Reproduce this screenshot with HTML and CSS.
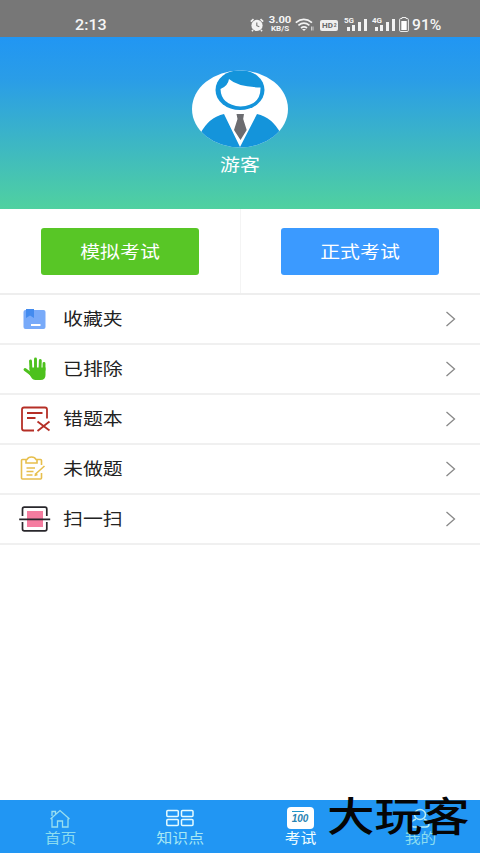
FILE: index.html
```html
<!DOCTYPE html>
<html lang="zh-CN">
<head>
<meta charset="utf-8">
<title>我的</title>
<link rel="stylesheet" href="styles.css">
</head>
<body>
<div class="app">
  <header class="status">
    <span class="time">2:13</span>
    <div class="indicators">
      <svg class="alarm" width="14" height="14" viewBox="0 0 14 14"><circle cx="7" cy="7.400" r="5.600" fill="#f3f3f3"/><path d="M.8 3.700 3.500 1.200M13.200 3.700 10.500 1.200M3 12l-1 1.300M11 12l1 1.300" stroke="#f3f3f3" stroke-width="1.600"/><path d="M6.800 4.500v3.200l2.500 1" fill="none" stroke="#777" stroke-width="1.100"/></svg>
      <div class="speed"><b>3.00</b><small>KB/S</small></div>
      <svg class="wifi" width="19" height="14" viewBox="0 0 19 14" fill="none" stroke="#f3f3f3" stroke-width="1.700"><path d="M.8 4.700q8-6.500 16.200 0M3.400 7.400q5.500-4.500 11 0M6 10q3-2.300 6 0"/><path d="m7 11 2 2 2-2Z" fill="#f3f3f3" stroke="none"/><path d="M16.500 8.500v4M18 8.500v4" stroke-width=".7"/></svg>
      <div class="hd">HD<i>2</i></div>
      <div class="cell"><small>5G</small><svg width="23" height="12" viewBox="0 0 23 12" fill="#f3f3f3"><path d="M3 8h3v4H3zM8 6h3v6H8zM14 3h3v9h-3zM20 0h3v12h-3z"/></svg></div>
      <div class="cell second"><small>4G</small><svg width="23" height="12" viewBox="0 0 23 12" fill="#f3f3f3"><path d="M3 8h3v4H3zM8 6h3v6H8zM14 3h3v9h-3zM20 0h3v12h-3z"/></svg></div>
      <svg class="battery" width="10" height="15" viewBox="0 0 10 15"><path d="M3 1.500V.5h4v1h1.200q1.200 0 1.200 1.200v10.600q0 1.200-1.200 1.200H1.800Q.6 14.500.6 13.300V2.700q0-1.200 1.200-1.200Z" fill="none" stroke="#eee"/><path d="M2.300 4h5.400v9H2.300z" fill="#fff"/></svg>
      <span class="percent">91%</span>
    </div>
  </header>

  <section class="profile">
    <svg class="avatar" width="97" height="78" viewBox="0 0 97 78">
      <defs><clipPath id="oval"><ellipse cx="48" cy="39" rx="48" ry="38.500"/></clipPath></defs>
      <g clip-path="url(#oval)">
        <path fill="#fff" d="M0 0h97v78H0z"/>
        <path fill="#1494db" d="M8 64Q17 47 32 44L48 77 65 44Q80 47 89 64L80 78H17Z"/>
        <ellipse cx="48" cy="20" rx="24.500" ry="20" fill="#1494db"/>
        <path fill="#fff" d="M37 9Q46 17 68.500 17.500Q69 35.500 48.500 36.500Q29 35 28.500 19Q36 16 37 9Z"/>
        <path fill="#6c6c70" d="M44.500 44h7.500l-.8 5 3.500 11-6.200 10-6.500-10 3.500-11Z"/>
      </g>
    </svg>
    <div class="name"><span class="wide">游客</span></div>
  </section>

  <section class="exams">
    <div class="exam"><button class="mock"><span class="wide">模拟考试</span></button></div>
    <div class="exam"><button class="formal"><span class="wide">正式考试</span></button></div>
  </section>

  <main class="menu">
    <div class="row">
      <svg class="icon" width="32" height="28" viewBox="0 0 32 28"><rect x="4.500" y="5" width="22" height="19" rx="2" fill="#78aaf9"/><path d="M7 4h8v9l-4-2.500L7 13Z" fill="#438bef"/><path d="M12 20h9.500" stroke="#fff" stroke-width="2"/></svg>
      <span class="wide">收藏夹</span><svg class="arrow" width="12" height="16" viewBox="0 0 12 16"><path d="m1.500 1 8 7-8 7"/></svg>
    </div>
    <div class="row">
      <svg class="icon" width="32" height="28" viewBox="0 0 32 28"><path d="M12 15 11.500 6M16.500 14V4M21 14l.3-8.500M25 15V8.500M12 19 6 14.500" fill="none" stroke="#4dc11d" stroke-width="2.900" stroke-linecap="round"/><path d="M10.500 12.500h16V20q0 5-5 5h-5q-3 0-4.500-3l-2.500-4 1.500-1Z" fill="#4dc11d"/></svg>
      <span class="wide">已排除</span><svg class="arrow" width="12" height="16" viewBox="0 0 12 16"><path d="m1.500 1 8 7-8 7"/></svg>
    </div>
    <div class="row">
      <svg class="icon" width="32" height="28" viewBox="0 0 32 28" fill="none" stroke="#b52f26" stroke-width="1.800"><path d="M15 25.500H5q-2 0-2-2v-19q0-2 2-2h21q2 0 2 2v9M8 8h15.500M8 13h8.500M18.500 16.500l12 9M30.500 16.500l-12 9.500"/></svg>
      <span class="wide">错题本</span><svg class="arrow" width="12" height="16" viewBox="0 0 12 16"><path d="m1.500 1 8 7-8 7"/></svg>
    </div>
    <div class="row">
      <svg class="icon" width="32" height="28" viewBox="0 0 32 28" fill="none" stroke="#e7bf4d" stroke-width="1.600"><path d="M22.500 10V5.500q0-1-1-1H17Q16 2 12.500 2T8 4.500H3.500q-1 0-1 1V23q0 1 1 1h18q1 0 1-1v-5M7 4.500v3.500h11V4.500M7.500 13H16M7.500 16.500h7M7.500 20h6M16 19.500l9.500-8.500M15.500 20.500l3-1"/></svg>
      <span class="wide">未做题</span><svg class="arrow" width="12" height="16" viewBox="0 0 12 16"><path d="m1.500 1 8 7-8 7"/></svg>
    </div>
    <div class="row">
      <svg class="icon" width="32" height="28" viewBox="0 0 32 28"><path d="M8 6h16v16H8z" fill="#f57da0"/><path d="M3.500 11V4q0-1.800 1.800-1.800H26q1.800 0 1.800 1.800v7M3.500 17v7q0 1.800 1.800 1.800H26q1.800 0 1.800-1.800v-7M.2 14.300h31" fill="none" stroke="#29272c" stroke-width="1.700"/></svg>
      <span class="wide">扫一扫</span><svg class="arrow" width="12" height="16" viewBox="0 0 12 16"><path d="m1.500 1 8 7-8 7"/></svg>
    </div>
  </main>

  <nav class="tabs">
    <div class="tab"><svg width="30" height="24" viewBox="0 0 30 24" fill="none" stroke="#99dff0" stroke-width="1.300"><path d="m5.500 12 9.500-8.500 9.500 8.500M7 11.500V20h5.500v-6h5v6H23v-8.500M7 9V4.500h3.500V7"/></svg><span class="wide">首页</span></div>
    <div class="tab"><svg width="30" height="24" viewBox="0 0 30 24" fill="none" stroke="#e5fbff" stroke-width="1.500"><rect x="1.800" y="3.500" width="11.500" height="6" rx="1"/><rect x="16.500" y="3.500" width="11.500" height="6" rx="1"/><rect x="1.800" y="12.500" width="11.500" height="6" rx="1"/><rect x="16.500" y="12.500" width="11.500" height="6" rx="1"/></svg><span class="wide">知识点</span></div>
    <div class="tab current"><div class="score"><span>100</span></div><span class="wide">考试</span></div>
    <div class="tab"><svg width="30" height="24" viewBox="0 0 30 24" fill="none" stroke="#b8edf5" stroke-width="1.500"><ellipse cx="15" cy="7.500" rx="5.500" ry="5"/><path d="M11 12q-5 2-5 5t3 3h12q3 0 3-3t-5-5"/></svg><span class="wide">我的</span></div>
    <div class="watermark">大玩客</div>
  </nav>
</div>
</body>
</html>
```

FILE: styles.css
```css
* { box-sizing: border-box; }
body { margin: 0; font-family: Roboto, "Noto Sans CJK SC", sans-serif; }
.app { width: 480px; height: 853px; display: flex; flex-direction: column; background: #fff; overflow: hidden; }
.wide { display: inline-block; transform: scaleX(1.17); white-space: nowrap; }
.status { height: 37px; flex: none; background: #777; color: #f5f5f5; display: flex; justify-content: space-between; padding: 13px 37px 0 75px; }
.time { font-size: 14px; line-height: 24px; font-weight: 500; transform: scaleX(1.15); transform-origin: left; }
.indicators { display: flex; align-items: center; height: 23px; }
.speed { display: flex; flex-direction: column; width: 24px; margin: 0 3px 0 4px; text-align: center; }
.speed b { font-size: 9px; line-height: 9px; transform: scaleX(1.25); }
.speed small { font-size: 7px; line-height: 8px; font-weight: bold; transform: scaleX(1.15); }
.hd { width: 18px; height: 11px; margin: 1px 6px 0 6px; border-radius: 2px; background: #eee; color: #666; font: bold 8px/11px Roboto, sans-serif; padding-left: 2px; display: flex; }
.hd i { font-size: 5px; font-style: normal; margin-left: 1px; }
.cell { position: relative; width: 23px; height: 12px; display: flex; }
.cell small { position: absolute; left: 0; top: -2px; font-size: 8px; line-height: 7px; font-weight: bold; }
.second { margin-left: 5px; }
.battery { margin: 0 3px 0 4px; }
.percent { width: 31px; font-size: 14px; font-weight: 500; line-height: 24px; transform: scaleX(1.12); transform-origin: left; }
.profile { height: 172px; flex: none; background: linear-gradient(#2196f3, #2a9de7 25%, #50d1a0); display: flex; flex-direction: column; align-items: center; padding-top: 33px; }
.name { color: #fff; font-size: 17px; line-height: 24px; margin-top: 5px; }
.exams { height: 86px; flex: none; display: grid; grid-template-columns: 1fr 1fr; border-bottom: 2px solid #eee; }
.exam { display: flex; justify-content: center; padding-top: 19px; }
.exam + .exam { box-shadow: inset 1px 0 #f4f4f4; }
.exam button { width: 158px; height: 47px; border: 0; border-radius: 3px; color: #fff; font: 17px/24px "Noto Sans CJK SC", sans-serif; padding: 0 1px 2px 0; }
.mock { background: #58c626; }
.formal { background: #3b9aff; }
.menu { flex: 1; }
.row { height: 50px; display: flex; align-items: center; border-bottom: 2px solid #f0f0f0; padding: 0 23px 1px 19px; color: #222; font-size: 17px; line-height: 24px; }
.icon { margin-right: 12px; }
.row .wide { transform-origin: left; }
.arrow { margin-left: auto; fill: none; stroke: #888; stroke-width: 1.3; }
.tabs { height: 53px; flex: none; background: #2196f3; display: grid; grid-template-columns: repeat(4, 1fr); position: relative; }
.tab { display: flex; flex-direction: column; align-items: center; padding-top: 7px; font-size: 13.5px; line-height: 16px; color: #8bdcf0; }
.tab:nth-child(2) { color: #a7e7f3; }
.tab.current { color: #f3ffff; }
.tab svg, .score { flex: none; margin-bottom: -1px; }
.score { width: 27px; height: 22px; margin-bottom: 1px; border-radius: 4px; background: linear-gradient(#2196c9, #2196c9) 5px 4px / 12px 1px no-repeat, #fff; color: #2884b3; text-align: center; }
.score span { display: inline-block; font: italic bold 10px/14px "Liberation Sans", sans-serif; padding-top: 5px; }
.watermark { position: absolute; left: 327px; top: -6px; color: #050505; font: 500 47.5px/47px "Noto Sans CJK SC", sans-serif; white-space: nowrap; transform: scaleY(.84); transform-origin: top; }
```
